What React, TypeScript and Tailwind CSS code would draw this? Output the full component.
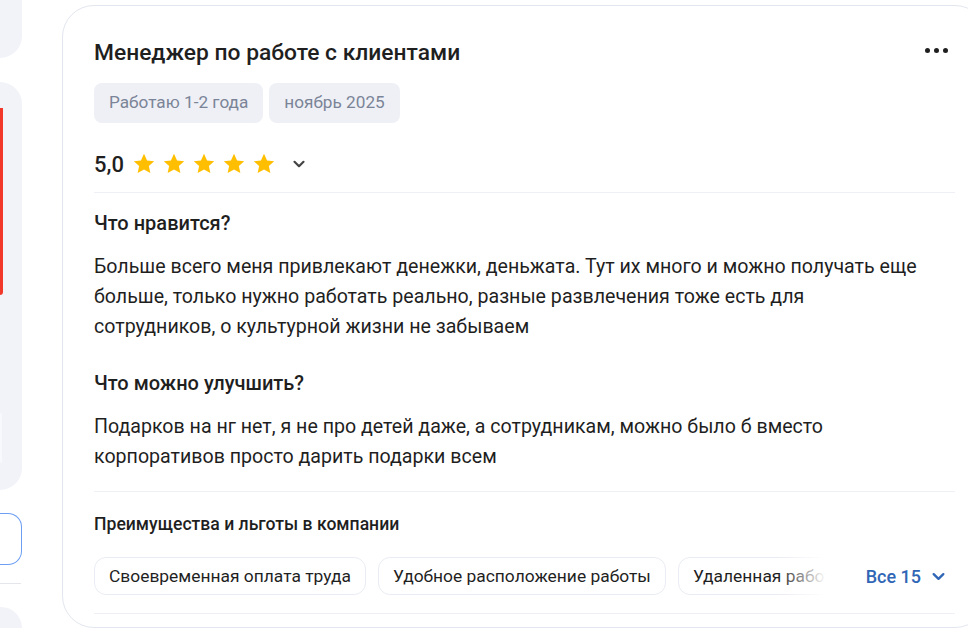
import React from "react";

const Star = () => (
  <svg width="24" height="24" viewBox="0 0 24 24" className="shrink-0">
    <path
      d="M12 1.8l3.05 6.6 7.15.8-5.33 4.86 1.48 7.04L12 17.5l-6.35 3.6 1.48-7.04L1.8 9.2l7.15-.8z"
      fill="#ffbf00"
    />
  </svg>
);

const Chevron = ({ color = "#444", size = 14 }: { color?: string; size?: number }) => (
  <svg width={size} height={size} viewBox="0 0 14 14" className="shrink-0">
    <path d="M2.5 4.8L7 9.2l4.5-4.4" fill="none" stroke={color} strokeWidth="2.2" strokeLinecap="round" strokeLinejoin="round" />
  </svg>
);

const SideRail = () => (
  <aside className="w-[22px] shrink-0 flex flex-col">
    <div className="h-[58px] bg-[#f2f3f9] rounded-br-[22px]" />
    <div className="mt-[24px] h-[408px] bg-[#f2f3f9] rounded-r-[24px] flex flex-col pt-[26px]">
      <div className="w-[3px] h-[187px] bg-[#f2372b] rounded-br-[3px]" />
      <div className="mt-[118px] w-[2px] h-[50px] bg-[#f8f9fc] rounded-r-[2px]" />
    </div>
    <div className="mt-[23px] h-[52px] border border-l-0 border-[#6c9ef4] rounded-r-[14px] bg-white" />
    <div className="mt-[18px] h-px w-[21px] bg-[#e4e6eb]" />
    <div className="mt-[23px] flex-1 bg-[#f2f3f9] rounded-tr-[22px]" />
  </aside>
);

const Tag = ({ children }: { children: React.ReactNode }) => (
  <span className="h-[40px] px-[15px] flex items-center rounded-[8px] bg-[#eef0f6] text-[17.2px] text-[#7b8497]">
    {children}
  </span>
);

const Chip = ({ children }: { children: React.ReactNode }) => (
  <span className="h-[38px] px-[14px] flex items-center shrink-0 rounded-[12px] border border-[#eaecf3] text-[17.4px] text-[#1f1f1f] whitespace-nowrap">
    {children}
  </span>
);

const perks = ["Своевременная оплата труда", "Удобное расположение работы", "Удаленная работа"];

export default function App() {
  return (
    <div
      className="w-[968px] h-[628px] overflow-hidden bg-white flex"
      style={{ fontFamily: "Roboto, 'Noto Sans', sans-serif" }}
    >
      <SideRail />

      <article className="ml-[40px] mt-[5px] w-[925px] shrink-0 border border-[#e2e6ee] rounded-[32px] px-[31px] pt-[33px] text-[#1f1f1f]">
        <div className="flex items-center justify-between h-[28px]">
          <h2 className="text-[22.8px] font-medium leading-[28px]">Менеджер по работе с клиентами</h2>
          <button className="flex gap-[4px] items-center pr-[7px] -mt-[6px]">
            <span className="w-[5px] h-[5px] rounded-full bg-[#1f1f1f]" />
            <span className="w-[5px] h-[5px] rounded-full bg-[#1f1f1f]" />
            <span className="w-[5px] h-[5px] rounded-full bg-[#1f1f1f]" />
          </button>
        </div>

        <div className="mt-[16px] flex gap-[6px]">
          <Tag>Работаю 1-2 года</Tag>
          <Tag>ноябрь 2025</Tag>
        </div>

        <div className="mt-[25px] h-[32px] flex items-center">
          <span className="text-[22px] font-medium mr-[8px]">5,0</span>
          <div className="flex gap-[6px]">
            <Star />
            <Star />
            <Star />
            <Star />
            <Star />
          </div>
          <span className="ml-[16px]">
            <Chevron />
          </span>
        </div>

        <div className="mt-[12px] h-px bg-[#eef0f5]" />

        <h3 className="mt-[17px] text-[20px] font-medium leading-[26px]">Что нравится?</h3>
        <p className="mt-[16px] text-[19.6px] leading-[30px] max-w-[828px]">
          Больше всего меня привлекают денежки, деньжата. Тут их много и можно получать еще больше, только нужно
          работать реально, разные развлечения тоже есть для сотрудников, о культурной жизни не забываем
        </p>

        <h3 className="mt-[28px] text-[20px] font-medium leading-[26px]">Что можно улучшить?</h3>
        <p className="mt-[16px] text-[19.6px] leading-[30px] max-w-[828px]">
          Подарков на нг нет, я не про детей даже, а сотрудникам, можно было б вместо корпоративов просто дарить
          подарки всем
        </p>

        <div className="mt-[19px] h-px bg-[#eef0f5]" />

        <h4 className="mt-[20px] text-[17.6px] font-medium leading-[24px]">Преимущества и льготы в компании</h4>

        <div className="mt-[21px] flex items-center">
          <div className="relative flex-1 min-w-0 mr-[32px] overflow-hidden flex gap-[12px]">
            {perks.map((p) => (
              <Chip key={p}>{p}</Chip>
            ))}
            <div className="absolute right-0 top-0 h-full w-[48px] bg-gradient-to-r from-white/0 to-white" />
          </div>
          <button className="shrink-0 flex items-center gap-[10px] pl-[8px] pr-[9px] text-[18px] font-medium text-[#3066b6] whitespace-nowrap">
            Все 15
            <Chevron color="#3066b6" size={15} />
          </button>
        </div>

        <div className="mt-[18px] h-px bg-[#eef0f5]" />
      </article>
    </div>
  );
}
